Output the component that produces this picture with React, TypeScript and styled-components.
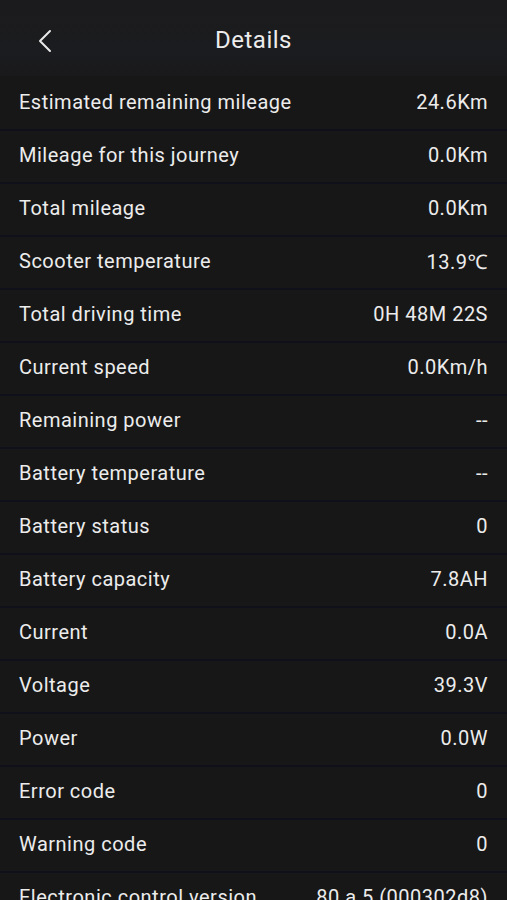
import React from "react";
import styled, { createGlobalStyle } from "styled-components";

const Global = createGlobalStyle`
  html, body { margin: 0; padding: 0; background: #171717; }
  body { font-family: Roboto, "Noto Sans", Arial, sans-serif; -webkit-font-smoothing: antialiased; }
`;

const Page = styled.div`
  width: 507px;
  min-height: 900px;
  background: #171717;
  overflow: hidden;
`;

const Header = styled.header`
  position: relative;
  height: 76px;
  display: flex;
  align-items: center;
  justify-content: center;
  box-sizing: border-box;
  background: linear-gradient(180deg, #1b1b1d 0%, #1b1c1f 70%, #19191b 100%);
`;

const Back = styled.button`
  position: absolute;
  left: 34px;
  top: 27px;
  width: 22px;
  height: 28px;
  padding: 0;
  border: none;
  background: transparent;
  display: flex;
  align-items: center;
  justify-content: center;
`;

const Title = styled.h1`
  margin: 4px 0 0 0;
  font-size: 24px;
  font-weight: 400;
  color: #ececec;
  letter-spacing: 0.5px;
`;

const List = styled.div`
  display: flex;
  flex-direction: column;
`;

const Row = styled.div<{ $first?: boolean }>`
  height: 53px;
  box-sizing: border-box;
  display: flex;
  align-items: center;
  justify-content: space-between;
  padding: 0 19px 3px;
  border-top: 2px solid ${(p) => (p.$first ? "transparent" : "#10101b")};
  background: #171717;
  white-space: nowrap;
`;

const Label = styled.span`
  font-size: 20px;
  letter-spacing: 0.5px;
  color: #ececec;
`;

const Value = styled.span`
  font-size: 20px;
  letter-spacing: 0.5px;
  color: #ececec;
`;

const rows: [string, string][] = [
  ["Estimated remaining mileage", "24.6Km"],
  ["Mileage for this journey", "0.0Km"],
  ["Total mileage", "0.0Km"],
  ["Scooter temperature", "13.9℃"],
  ["Total driving time", "0H 48M 22S"],
  ["Current speed", "0.0Km/h"],
  ["Remaining power", "--"],
  ["Battery temperature", "--"],
  ["Battery status", "0"],
  ["Battery capacity", "7.8AH"],
  ["Current", "0.0A"],
  ["Voltage", "39.3V"],
  ["Power", "0.0W"],
  ["Error code", "0"],
  ["Warning code", "0"],
  ["Electronic control version", "80 a 5 (000302d8)"],
];

export default function App() {
  return (
    <Page>
      <Global />
      <Header>
        <Back aria-label="Back">
          <svg width="16" height="24" viewBox="0 0 16 24" fill="none">
            <path d="M13 2 L3 12 L13 22" stroke="#e8e8e8" strokeWidth="2" strokeLinecap="round" strokeLinejoin="round" />
          </svg>
        </Back>
        <Title>Details</Title>
      </Header>
      <List>
        {rows.map(([l, v], i) => (
          <Row key={l} $first={i === 0}>
            <Label>{l}</Label>
            <Value>{v}</Value>
          </Row>
        ))}
      </List>
    </Page>
  );
}
